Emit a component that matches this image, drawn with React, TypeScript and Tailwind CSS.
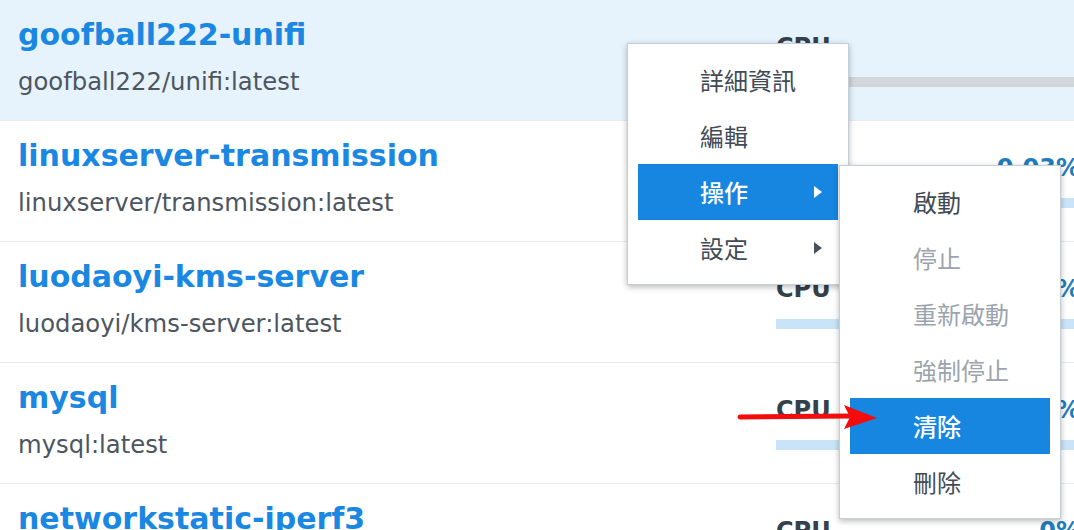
const ROWS = [
  { name: "goofball222-unifi", image: "goofball222/unifi:latest", pct: "", running: false, active: true },
  { name: "linuxserver-transmission", image: "linuxserver/transmission:latest", pct: "0.03%", running: true, active: false },
  { name: "luodaoyi-kms-server", image: "luodaoyi/kms-server:latest", pct: "0.00%", running: true, active: false },
  { name: "mysql", image: "mysql:latest", pct: "0.00%", running: true, active: false },
  { name: "networkstatic-iperf3", image: "networkstatic/iperf3:latest", pct: "0%", running: true, active: false },
];

const MAIN_MENU = [
  { label: "詳細資訊", sub: false, on: false },
  { label: "編輯", sub: false, on: false },
  { label: "操作", sub: true, on: true },
  { label: "設定", sub: true, on: false },
];

const SUB_MENU = [
  { label: "啟動", disabled: false, on: false },
  { label: "停止", disabled: true, on: false },
  { label: "重新啟動", disabled: true, on: false },
  { label: "強制停止", disabled: true, on: false },
  { label: "清除", disabled: false, on: true },
  { label: "刪除", disabled: false, on: false },
];

function Caret({ on }: { on: boolean }) {
  return (
    <svg width="8" height="12" viewBox="0 0 8 12">
      <path d="M0 0 L8 6 L0 12 Z" fill={on ? "#ffffff" : "#4a535c"} />
    </svg>
  );
}

function ContainerRow({ row }: { row: (typeof ROWS)[number] }) {
  return (
    <div
      className={`flex h-[121px] shrink-0 border-b border-[#e7ebef] ${
        row.active ? "bg-[#e6f3fd]" : "bg-white"
      }`}
    >
      <div className="flex-1 pl-[18px] pt-[17px]">
        <div className="text-[30px] leading-[36px] font-bold text-[#1a88e2] whitespace-nowrap">
          {row.name}
        </div>
        <div className="mt-[14px] text-[24.3px] leading-[30px] text-[#4d5660] whitespace-nowrap">
          {row.image}
        </div>
      </div>
      <div className="w-[304px] shrink-0 pt-[33px]">
        <div className="flex items-center justify-between text-[24px] leading-[28px] font-bold">
          <span className="text-[#36404a]">CPU</span>
          <span className="text-[#1f7dbd]">{row.pct}</span>
        </div>
        <div className={`mt-[16px] h-[10px] ${row.running ? "bg-[#c9e4f8]" : "bg-[#d3d7db]"}`} />
      </div>
    </div>
  );
}

export default function App() {
  return (
    <div
      className="relative w-[1074px] h-[530px] overflow-hidden bg-white"
      style={{ fontFamily: '"DejaVu Sans", Verdana, sans-serif' }}
    >
      <div className="flex w-[1080px] flex-col">
        {ROWS.map((r) => (
          <ContainerRow key={r.name} row={r} />
        ))}
      </div>

      {/* main context menu */}
      <div
        className="absolute left-[627px] top-[43px] w-[222px] border border-[#c5cdd5] bg-white px-[10px] py-[8px] shadow-[0_2px_6px_rgba(0,0,0,0.28)]"
        style={{ fontFamily: '"Noto Sans CJK TC", "Noto Sans", sans-serif' }}
      >
        {MAIN_MENU.map((m) => (
          <div
            key={m.label}
            className={`flex h-[56px] items-center justify-between pl-[62px] pr-[16px] text-[24px] ${
              m.on ? "bg-[#1786e0] font-medium text-white" : "text-[#414b55]"
            }`}
          >
            <span>{m.label}</span>
            {m.sub && <Caret on={m.on} />}
          </div>
        ))}
      </div>

      {/* sub menu */}
      <div
        className="absolute left-[839px] top-[165px] w-[222px] border border-[#c5cdd5] bg-white px-[10px] py-[8px] shadow-[0_2px_6px_rgba(0,0,0,0.28)]"
        style={{ fontFamily: '"Noto Sans CJK TC", "Noto Sans", sans-serif' }}
      >
        {SUB_MENU.map((m) => (
          <div
            key={m.label}
            className={`flex h-[56px] items-center pl-[63px] text-[24px] ${
              m.on
                ? "bg-[#1786e0] font-medium text-white"
                : m.disabled
                ? "text-[#9ba4ad]"
                : "text-[#414b55]"
            }`}
          >
            {m.label}
          </div>
        ))}
      </div>

      {/* annotation arrow */}
      <svg className="absolute left-0 top-0" width="1074" height="530" viewBox="0 0 1074 530">
        <path d="M740 417 L850 416" stroke="#f20c0c" strokeWidth="5" strokeLinecap="round" />
        <path d="M844 405 L877 418 L844 429 L850 417 Z" fill="#f20c0c" />
      </svg>
    </div>
  );
}
